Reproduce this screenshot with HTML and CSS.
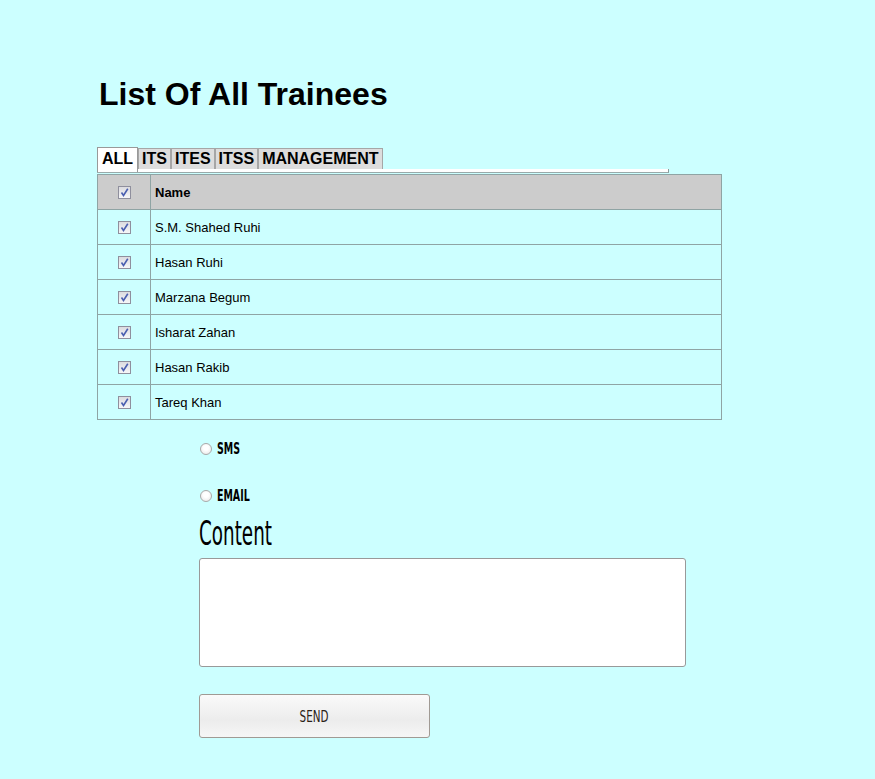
FILE: index.html
```html
<!DOCTYPE html>
<html>
<head>
<meta charset="utf-8">
<link rel="stylesheet" href="styles.css">
</head>
<body>
<div class="page">
  <h1 class="title">List Of All Trainees</h1>
  <div class="tabbar">
    <div class="tabs">
      <div class="tab active">ALL</div>
      <div class="tab">ITS</div>
      <div class="tab">ITES</div>
      <div class="tab">ITSS</div>
      <div class="tab">MANAGEMENT</div>
    </div>
    <div class="tabline"></div>
  </div>
  <table class="grid">
    <tr class="head">
      <td class="c1"><span class="cb"><svg viewBox="0 0 11 11" width="11" height="11"><path d="M2.5 5.5 L4.5 8.5 L8.8 1.8" fill="none" stroke="#4a5fb0" stroke-width="1.6"/></svg></span></td>
      <td class="c2">Name</td>
    </tr>
    <tr><td class="c1"><span class="cb"><svg viewBox="0 0 11 11" width="11" height="11"><path d="M2.5 5.5 L4.5 8.5 L8.8 1.8" fill="none" stroke="#4a5fb0" stroke-width="1.6"/></svg></span></td><td class="c2">S.M. Shahed Ruhi</td></tr>
    <tr><td class="c1"><span class="cb"><svg viewBox="0 0 11 11" width="11" height="11"><path d="M2.5 5.5 L4.5 8.5 L8.8 1.8" fill="none" stroke="#4a5fb0" stroke-width="1.6"/></svg></span></td><td class="c2">Hasan Ruhi</td></tr>
    <tr><td class="c1"><span class="cb"><svg viewBox="0 0 11 11" width="11" height="11"><path d="M2.5 5.5 L4.5 8.5 L8.8 1.8" fill="none" stroke="#4a5fb0" stroke-width="1.6"/></svg></span></td><td class="c2">Marzana Begum</td></tr>
    <tr><td class="c1"><span class="cb"><svg viewBox="0 0 11 11" width="11" height="11"><path d="M2.5 5.5 L4.5 8.5 L8.8 1.8" fill="none" stroke="#4a5fb0" stroke-width="1.6"/></svg></span></td><td class="c2">Isharat Zahan</td></tr>
    <tr><td class="c1"><span class="cb"><svg viewBox="0 0 11 11" width="11" height="11"><path d="M2.5 5.5 L4.5 8.5 L8.8 1.8" fill="none" stroke="#4a5fb0" stroke-width="1.6"/></svg></span></td><td class="c2">Hasan Rakib</td></tr>
    <tr><td class="c1"><span class="cb"><svg viewBox="0 0 11 11" width="11" height="11"><path d="M2.5 5.5 L4.5 8.5 L8.8 1.8" fill="none" stroke="#4a5fb0" stroke-width="1.6"/></svg></span></td><td class="c2">Tareq Khan</td></tr>
  </table>
  <div class="form">
    <div class="opt opt1"><span class="radio"></span><span class="lbl">SMS</span></div>
    <div class="opt opt2"><span class="radio"></span><span class="lbl">EMAIL</span></div>
    <div class="content-lbl"><span>Content</span></div>
    <div class="textarea"></div>
    <div class="btn"><span>SEND</span></div>
  </div>
</div>
</body>
</html>
```

FILE: styles.css
```css
html, body {
  margin: 0;
  padding: 0;
  background: #ccffff;
}
body {
  font-family: "Liberation Sans", Arial, sans-serif;
  color: #000;
}
.page {
  padding: 76px 0 0 97px;
}
.title {
  margin: 0;
  font-size: 32px;
  line-height: 37px;
  font-weight: bold;
  padding-left: 2px;
}
.tabbar {
  margin-top: 34px;
  margin-bottom: 1px;
  width: 572px;
}
.tabs {
  display: flex;
  align-items: flex-end;
  height: 22px;
  position: relative;
}
.tab {
  height: 20px;
  line-height: 20px;
  padding: 0 3px;
  background: #dddddd;
  border: 1px solid #a6a6a6;
  border-bottom: none;
  font-size: 16px;
  font-weight: bold;
  box-sizing: content-box;
}
.tab.active {
  background: #fff;
  height: 24px;
  line-height: 21px;
  padding: 0 4px;
  margin-bottom: -3px;
  border-color: #999;
  position: relative;
  z-index: 1;
}
.tabline {
  height: 3px;
  width: 571px;
  background: #fff;
  border-right: 1px solid #8a9a9a;
  border-bottom: 1px solid #9aa;
}
.grid {
  border-collapse: collapse;
  width: 625px;
  font-size: 13px;
}
.grid td {
  border: 1px solid #8fa4a4;
  height: 34px;
  padding: 0;
}
.grid .c1 {
  width: 52px;
  text-align: center;
}
.grid .c2 {
  padding-left: 4px;
}
.head td {
  background: #cccccc;
  font-weight: bold;
}
.cb {
  display: inline-block;
  width: 11px;
  height: 11px;
  border: 1px solid #8f8f9d;
  background: linear-gradient(#dcdce0, #f6f6f8);
  vertical-align: middle;
  position: relative;
  top: -1px;
}
.cb svg {
  display: block;
}
.form {
  padding-left: 102px;
}
.opt {
  display: flex;
  align-items: center;
  height: 20px;
}
.opt1 {
  margin-top: 19px;
}
.opt2 {
  margin-top: 27px;
}
.radio {
  width: 10px;
  height: 10px;
  border: 1px solid #a9a9a9;
  border-radius: 50%;
  background: radial-gradient(circle at 50% 40%, #ffffff 30%, #e4e4e4 100%);
  margin-left: 1px;
}
.lbl {
  display: inline-block;
  margin-left: 5px;
  font-family: "DejaVu Sans Condensed", "DejaVu Sans", sans-serif;
  font-weight: bold;
  font-size: 15px;
  transform: scaleX(0.7);
  transform-origin: left center;
  color: #000;
}
.content-lbl {
  margin-top: 8px;
  height: 38px;
  line-height: 38px;
}
.content-lbl span {
  display: inline-block;
  font-family: "DejaVu Sans Condensed", "DejaVu Sans", sans-serif;
  font-size: 34px;
  transform: scaleX(0.6);
  transform-origin: left center;
}
.textarea {
  margin-top: 6px;
  width: 485px;
  height: 107px;
  background: #fff;
  border: 1px solid #999;
  border-radius: 3px;
}
.btn {
  margin-top: 27px;
  width: 229px;
  height: 42px;
  border: 1px solid #a09a94;
  border-radius: 3px;
  background: linear-gradient(#fafafa, #ececec 60%, #f6f6f6);
  display: flex;
  align-items: center;
  justify-content: center;
}
.btn span {
  display: inline-block;
  font-family: "DejaVu Sans Condensed", "DejaVu Sans", sans-serif;
  font-size: 16px;
  color: #2a2218;
  transform: scaleX(0.72);
}
```
